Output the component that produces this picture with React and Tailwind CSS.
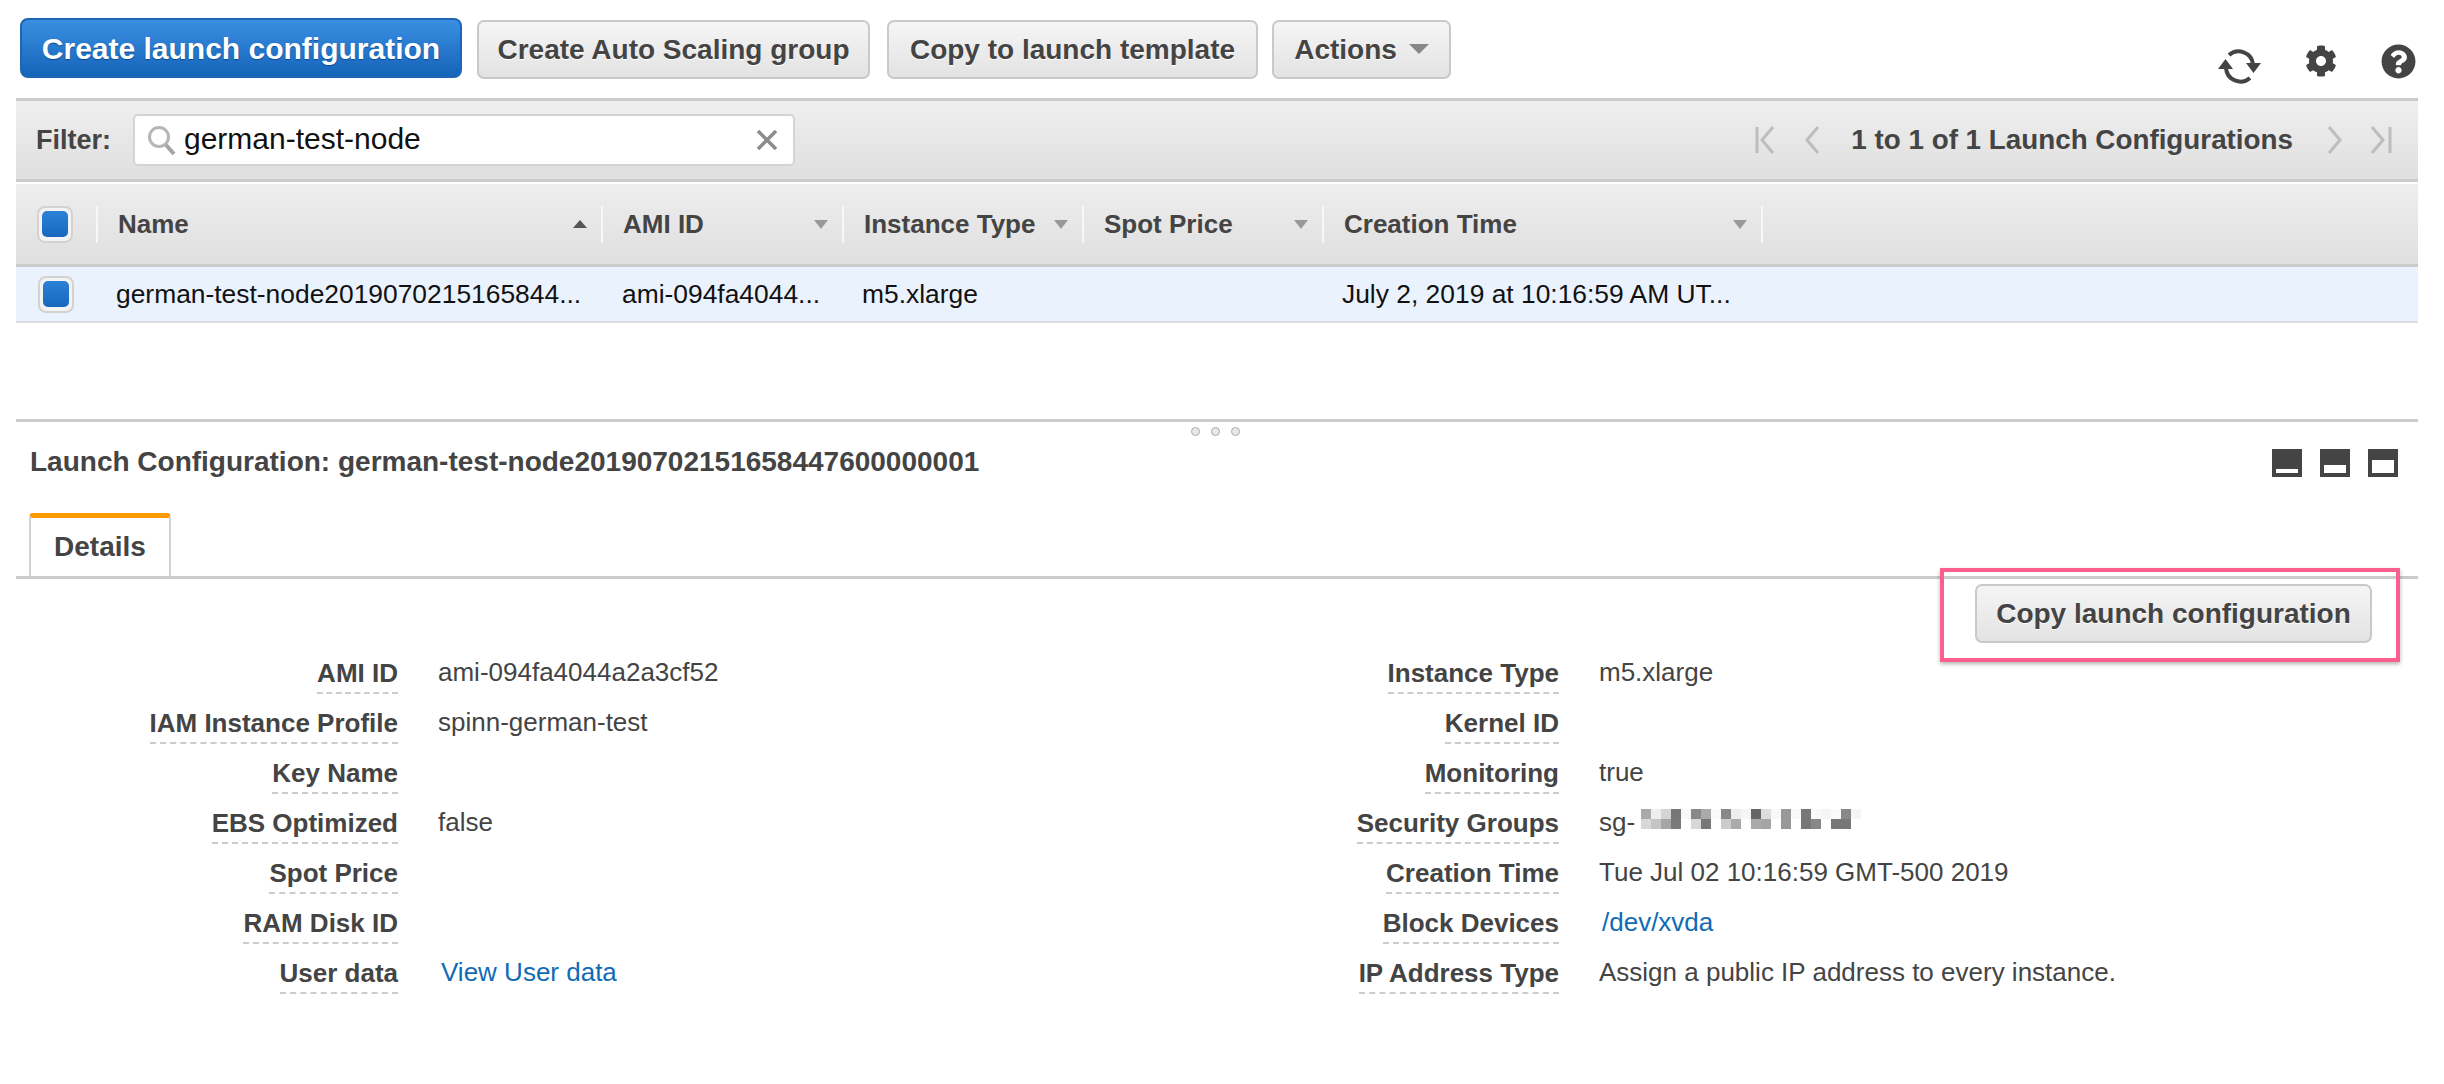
import React from "react";
import { FaCog, FaQuestionCircle } from "react-icons/fa";

function GrayBtn({ children, w }) {
  return (
    <button className={`h-[59px] rounded-[7px] border-2 border-[#c9c9c9] bg-linear-to-b from-[#f5f5f5] to-[#e3e3e3] text-[28px] font-bold text-[#444] [text-shadow:0_1px_0_#fff] flex items-center justify-center ${w}`}>
      {children}
    </button>
  );
}

function Check({ ml }) {
  return (
    <div className={`w-[36px] h-[37px] rounded-[8px] border-2 border-[#d2d2d2] bg-[#f3f3f3] flex items-center justify-center ${ml}`}>
      <div className="w-[26px] h-[26px] rounded-[5px] bg-linear-to-b from-[#2a82d8] to-[#1768bd]" />
    </div>
  );
}

function HeadCell({ label, w, sort }) {
  return (
    <div className={`h-[37px] border-l-2 border-[#f7f7f7] flex items-center justify-between pl-[20px] pr-[14px] ${w}`}>
      <span className="text-[26px] font-bold text-[#444] whitespace-nowrap">{label}</span>
      {sort === "up" ? (
        <span className="w-0 h-0 border-x-[7px] border-x-transparent border-b-[8px] border-b-[#555]" />
      ) : sort === "down" ? (
        <span className="w-0 h-0 border-x-[7px] border-x-transparent border-t-[9px] border-t-[#999]" />
      ) : null}
    </div>
  );
}

function RowCell({ w, children, pl }) {
  return <div className={`whitespace-nowrap text-[26.4px] pt-[2px] text-[#111] ${w} ${pl}`}>{children}</div>;
}

function Nav({ d, w }) {
  return (
    <svg width={w} height="28" viewBox={`0 0 ${w} 28`} fill="none" stroke="#bdbdbd" strokeWidth="3" className="shrink-0">
      <path d={d} />
    </svg>
  );
}

function Pane({ fill }) {
  return (
    <div className="w-[30px] h-[28px] bg-[#444] flex flex-col justify-end px-[4px] pb-[4px]">
      <div className="bg-white" style={{ height: fill }} />
    </div>
  );
}

function Field({ label, children, lw }) {
  return (
    <div className="flex h-[50px]">
      <div className={`flex justify-end ${lw}`}>
        <span className="h-[37px] leading-[33px] border-b-2 border-dashed border-[#ccc] text-[26px] font-bold text-[#444] whitespace-nowrap">{label}</span>
      </div>
      <div className="ml-[40px] text-[26px] leading-[30px] text-[#444] whitespace-nowrap flex items-start">{children}</div>
    </div>
  );
}

const top = ["#aaa","#eee","#d5d5d5","#777","#f8f8f8","#888","#aaa","#fafafa","#888","#eee","#f5f5f5","#666","#ddd","#f8f8f8","#999","#f8f8f8","#777","#f9f9f9","#f5f5f5","#fafafa","#888","#f5f5f5"];
const bot = ["#d8d8d8","#c4c4c4","#a5a5a5","#7a7a7a","#fff","#d8d8d8","#777","#fff","#ccc","#aaa","#fff","#aaa","#a5a5a5","#fff","#999","#fff","#777","#888","#fff","#777","#777","#fff"];

function Mosaic() {
  return (
    <svg width="220" height="20" viewBox="0 0 220 20" className="ml-[6px] mt-[2px]">
      {top.map((c, i) => <rect key={"t" + i} x={i * 10} y="0" width="10" height="10" fill={c} />)}
      {bot.map((c, i) => <rect key={"b" + i} x={i * 10} y="10" width="10" height="10" fill={c} />)}
    </svg>
  );
}

export default function App() {
  return (
    <div className="relative w-[2444px] h-[1084px] bg-white overflow-hidden font-['Liberation_Sans',Arial,sans-serif]">
      {/* toolbar */}
      <div className="flex h-[98px] pl-[20px] pr-[28px] pt-[18px]">
        <button className="w-[442px] h-[60px] rounded-[8px] border-2 border-[#1d66b3] bg-linear-to-b from-[#3a8fe2] to-[#1464ba] text-[30px] font-bold text-white flex items-center justify-center [text-shadow:0_1px_1px_#0b4a8f]">
          Create launch configuration
        </button>
        <div className="flex ml-[15px] mt-[2px]">
          <GrayBtn w="w-[393px]">Create Auto Scaling group</GrayBtn>
          <div className="w-[17px]" />
          <GrayBtn w="w-[371px]">Copy to launch template</GrayBtn>
          <div className="w-[14px]" />
          <GrayBtn w="w-[179px] gap-[12px]">
            Actions
            <span className="w-0 h-0 border-x-[10px] border-x-transparent border-t-[10px] border-t-[#888] mt-[-2px]" />
          </GrayBtn>
        </div>
        <div className="ml-auto flex items-start pt-[27px]">
          <svg width="44" height="36" viewBox="0 0 44 36" fill="none" className="mt-[3px]">
            <path d="M35 16 A14.5 14.5 0 0 0 11 7" stroke="#444" strokeWidth="4" />
            <path d="M8 20 A14.5 14.5 0 0 0 32 30" stroke="#444" strokeWidth="4" />
            <path d="M0 21 L15 21 L7.5 11 Z" fill="#444" />
            <path d="M28 15 L43 15 L35.5 25 Z" fill="#444" />
          </svg>
          <FaCog className="ml-[43px]" size={32} color="#444" />
          <FaQuestionCircle className="ml-[44px] mt-[-1px]" size={35} color="#444" />
        </div>
      </div>

      <div className="w-[2402px] ml-[16px]">
        {/* filter bar */}
        <div className="h-[84px] border-y-[3px] border-[#cbcbcb] bg-linear-to-b from-[#efefef] to-[#dfdfdf] flex items-center pl-[20px] pr-[26px]">
          <span className="text-[27px] font-bold text-[#444] w-[97px]">Filter:</span>
          <div className="w-[662px] h-[52px] bg-white rounded-[5px] border-2 border-[#d4d4d4] flex items-center pl-[12px] pr-[15px]">
            <svg width="30" height="32" viewBox="0 0 30 32" fill="none" className="shrink-0">
              <circle cx="12" cy="13" r="9.5" stroke="#b5b5b5" strokeWidth="3" />
              <path d="M19 21 L27 30" stroke="#a5a5a5" strokeWidth="4" />
            </svg>
            <span className="ml-[7px] text-[30px] leading-[30px] mt-[-2px] text-[#111]">german-test-node</span>
            <svg width="22" height="22" viewBox="0 0 22 22" className="ml-auto" stroke="#8c8c8c" strokeWidth="3.5">
              <path d="M2 2 L20 20 M20 2 L2 20" />
            </svg>
          </div>
          <div className="ml-auto flex items-center">
            <Nav w={20} d="M2 1 V27 M18 1 L7 14 L18 27" />
            <div className="w-[30px]" />
            <Nav w={15} d="M13 1 L2 14 L13 27" />
            <span className="ml-[31px] mr-[34px] text-[27.8px] font-bold text-[#444]">1 to 1 of 1 Launch Configurations</span>
            <Nav w={15} d="M2 1 L13 14 L2 27" />
            <div className="w-[28px]" />
            <Nav w={22} d="M2 1 L13 14 L2 27 M20 1 V27" />
          </div>
        </div>
        {/* header */}
        <div className="mt-[2px] h-[83px] bg-linear-to-b from-[#eeeeee] to-[#dfdfdf] border-b-[3px] border-[#cbcbcb] flex items-center">
          <Check ml="ml-[21px] mr-[23px]" />
          <HeadCell label="Name" w="w-[505px]" sort="up" />
          <HeadCell label="AMI ID" w="w-[241px]" sort="down" />
          <HeadCell label="Instance Type" w="w-[240px]" sort="down" />
          <HeadCell label="Spot Price" w="w-[240px]" sort="down" />
          <HeadCell label="Creation Time" w="w-[439px]" sort="down" />
          <div className="h-[37px] border-l-2 border-[#f7f7f7]" />
        </div>
        {/* row */}
        <div className="h-[56px] bg-[#eaf2fd] border-b-[2px] border-[#dcdcdc] flex items-center">
          <Check ml="ml-[22px] mr-[20px]" />
          <RowCell w="w-[506px]" pl="pl-[22px]">german-test-node2019070215165844...</RowCell>
          <RowCell w="w-[240px]" pl="pl-[22px]">ami-094fa4044...</RowCell>
          <RowCell w="w-[240px]" pl="pl-[22px]">m5.xlarge</RowCell>
          <RowCell w="w-[240px]" />
          <RowCell w="w-[439px]" pl="pl-[22px]">July 2, 2019 at 10:16:59 AM UT...</RowCell>
        </div>
        <div className="h-[96px]" />
        {/* split pane */}
        <div className="h-[160px] border-t-[3px] border-[#cbcbcb] border-b-[3px] relative flex flex-col">
          <div className="absolute top-[5px] left-[1175px] flex gap-[11px]">
            <span className="w-[9px] h-[9px] rounded-full border border-[#aaa] bg-[#e8e8e8]" />
            <span className="w-[9px] h-[9px] rounded-full border border-[#aaa] bg-[#e8e8e8]" />
            <span className="w-[9px] h-[9px] rounded-full border border-[#aaa] bg-[#e8e8e8]" />
          </div>
          <div className="flex items-center h-[76px] pt-[6px] pl-[14px] pr-[20px]">
            <span className="text-[28px] font-bold text-[#444]">Launch Configuration: german-test-node20190702151658447600000001</span>
            <div className="ml-auto flex gap-[18px] mt-[3px]">
              <Pane fill={4} />
              <Pane fill={8} />
              <Pane fill={13} />
            </div>
          </div>
          <div className="mt-[18px] ml-[13px] w-[142px] h-[63px] shrink-0 bg-white border-x-2 border-[#d4d4d4] border-t-[5px] border-t-[#f90] rounded-t-[4px] flex items-center justify-center text-[28px] font-bold text-[#444]">
            Details
          </div>
        </div>
      </div>

      {/* detail action */}
      <div className="flex justify-end pr-[72px] mt-[5px]">
        <GrayBtn w="w-[397px]">Copy launch configuration</GrayBtn>
      </div>

      {/* fields */}
      <div className="flex mt-[14px]">
        <div className="w-[1161px]">
          <Field lw="w-[398px]" label="AMI ID">ami-094fa4044a2a3cf52</Field>
          <Field lw="w-[398px]" label="IAM Instance Profile">spinn-german-test</Field>
          <Field lw="w-[398px]" label="Key Name" />
          <Field lw="w-[398px]" label="EBS Optimized">false</Field>
          <Field lw="w-[398px]" label="Spot Price" />
          <Field lw="w-[398px]" label="RAM Disk ID" />
          <Field lw="w-[398px]" label="User data"><span className="ml-[3px] text-[#0f6bb5]">View User data</span></Field>
        </div>
        <div>
          <Field lw="w-[398px]" label="Instance Type">m5.xlarge</Field>
          <Field lw="w-[398px]" label="Kernel ID" />
          <Field lw="w-[398px]" label="Monitoring">true</Field>
          <Field lw="w-[398px]" label="Security Groups">sg-<Mosaic /></Field>
          <Field lw="w-[398px]" label="Creation Time">Tue Jul 02 10:16:59 GMT-500 2019</Field>
          <Field lw="w-[398px]" label="Block Devices"><span className="ml-[3px] text-[#0f6bb5]">/dev/xvda</span></Field>
          <Field lw="w-[398px]" label="IP Address Type">Assign a public IP address to every instance.</Field>
        </div>
      </div>

      {/* annotation */}
      <div className="absolute left-[1940px] top-[568px] w-[460px] h-[94px] border-[4px] border-[#fb5f90] shadow-[0_2px_4px_rgba(0,0,0,0.3)]" />
    </div>
  );
}
